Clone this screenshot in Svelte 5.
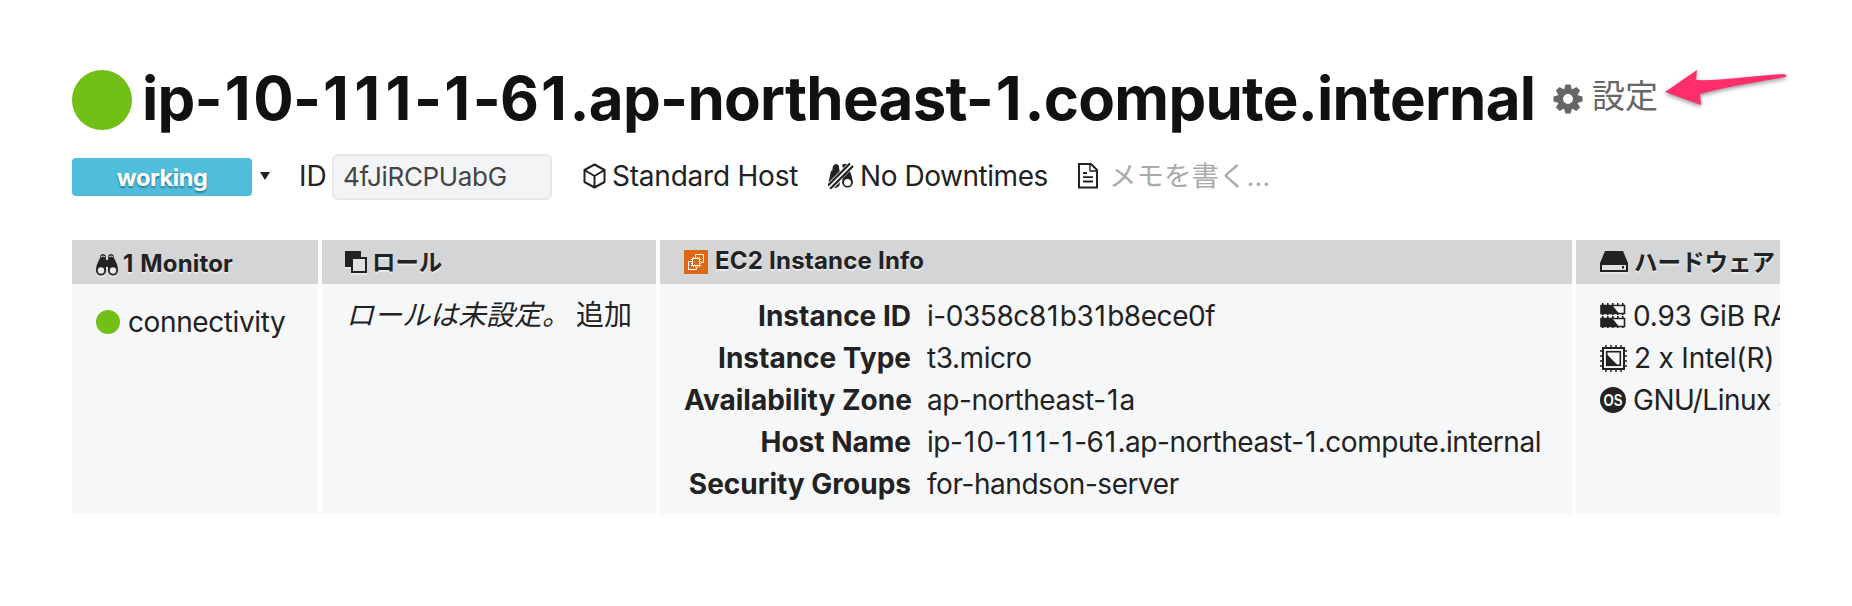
<script>
  const host = 'ip-10-111-1-61.ap-northeast-1.compute.internal';
  const facts = [
    ['Instance ID', 'i-0358c81b31b8ece0f'],
    ['Instance Type', 't3.micro'],
    ['Availability Zone', 'ap-northeast-1a'],
    ['Host Name', host],
    ['Security Groups', 'for-handson-server'],
  ];
  const teeth = [0, 45, 90, 135, 180, 225, 270, 315];
  const pins = [3, 8, 13, 18, 23];
</script>

{#snippet spaced(text)}{#each text.split(/(1)/) as part}{#if part === '1'}<b class="one">1</b>{:else}{part}{/if}{/each}{/snippet}

<main>
  <header class="title">
    <span class="status"></span>
    <h1>{@render spaced(host)}</h1>
    <a class="settings">
      <svg width="30" height="30" viewBox="-15 -15 30 30">
        {#each teeth as a}
          <path d="M-4-9 -2.6-14.5H2.6L4-9Z" transform="rotate({a})" />
        {/each}
        <circle r="7.8" fill="none" stroke="currentColor" stroke-width="5.6" />
      </svg>
      <span>設定</span>
    </a>
    <svg class="arrow" width="132" height="48" viewBox="0 0 132 48">
      <path d="M5 25 37 3 36 13C57 14 91 9 123 7Q127 7 126 10C97 15 66 20 40 27L41 38Z" />
    </svg>
  </header>

  <section class="meta">
    <div class="badge">working</div>
    <svg class="caret" width="10" height="8" viewBox="0 0 10 8"><path d="M0 0H10L5 8Z" /></svg>
    <span class="idlabel">ID</span>
    <div class="idbox"><span>4fJiRCPUabG</span></div>
    <span class="item host">
      <svg width="23" height="26" viewBox="0 0 23 26" fill="none" stroke="currentColor" stroke-width="2" stroke-linejoin="round">
        <path d="M11.5 1.5 21.5 7V19L11.5 24.5 1.5 19V7ZM1.5 7 11.5 13 21.5 7M11.5 13V24" />
      </svg>
      <span>Standard Host</span>
    </span>
    <span class="item down">
      <svg width="26" height="26" viewBox="0 0 26 26">
        <path d="M5 3Q8-1 11 3V6L3 14ZM3 8 11 5 13 14 2 24Q0 20 1 17Z" />
        <path d="M14 2Q18-1 21 3L16 8ZM21 6Q24 12 25 19A5.5 5.5 0 1 1 14 19L15 14Z" />
        <circle cx="19.5" cy="19.5" r="3.5" fill="#fff" />
        <path d="M6 25 12 19Q12 25 6 25Z" />
        <path d="M0 25 24 1" stroke="#fff" stroke-width="7" />
        <path d="M0 22.5 22 .5M2 26 25 3" stroke="currentColor" stroke-width="2.2" />
      </svg>
      <span>No Downtimes</span>
    </span>
    <span class="item memo">
      <svg width="20" height="26" viewBox="0 0 20 26" fill="none" stroke="currentColor" stroke-width="2">
        <path d="M1 1H13L19 7V24.5H1Z" /><path d="M12 1V8H19" stroke-width="1.4" />
        <path d="M5 10H9M5 14.2H15M5 18.5H15" stroke-width="1.8" />
      </svg>
      <span>メモを書く…</span>
    </span>
  </section>

  <section class="panels">
    <article>
      <h2 class="low">
        <svg width="22" height="23" viewBox="0 0 22 23">
          <path d="M4 3Q7-1 10 3V18A5 5 0 1 1 0 17Q0 12 4 5ZM18 3Q15-1 12 3V18A5 5 0 1 0 22 17Q22 12 18 5Z" />
          <path d="M9 7H13V14H9Z" />
          <path d="M4.5 4Q7 2 9.5 4M12.5 4Q15 2 17.5 4" fill="none" stroke="#d4d5d7" />
          <circle cx="5" cy="17.5" r="3.2" fill="#e8e8e9" /><circle cx="17" cy="17.5" r="3.2" fill="#e8e8e9" />
        </svg>
        <span class="monitor">{@render spaced('1 Monitor')}</span>
      </h2>
      <div class="check"><i></i><span>connectivity</span></div>
    </article>

    <article>
      <h2 class="roles">
        <svg width="22" height="22" viewBox="0 0 22 22">
          <path d="M0 0H16V6H6V16H0Z" />
          <path d="M7 7H21V21H7Z" fill="#e2e2e3" stroke="currentColor" stroke-width="2" />
        </svg>
        <span>ロール</span>
      </h2>
      <p class="role"><em>ロールは未設定。</em><span>追加</span></p>
    </article>

    <article>
      <h2 class="ec2">
        <svg width="24" height="24" viewBox="0 0 24 24" fill="none" stroke="#fff">
          <rect width="24" height="24" fill="#dc6814" stroke="none" />
          <path d="M11.5 7V4.5H19.5V12.5H17M7 11.5H4.5V19.5H12.5V17" />
          <rect x="8.5" y="8.5" width="7" height="7" />
          <path d="M9 7.5H16M9 16.8H16M7.5 9V16M16.8 9V16" stroke-dasharray="1 1" stroke-width="1" />
        </svg>
        <span>EC2 Instance Info</span>
      </h2>
      <dl>
        {#each facts as [k, v]}
          <dt>{k}</dt><dd>{@render spaced(v)}</dd>
        {/each}
      </dl>
    </article>

    <article>
      <h2 class="hardware">
        <svg width="28" height="22" viewBox="0 0 28 22">
          <path d="M5 0H23L28 12V21H0V12Z" />
          <path d="M2 14H26V19H2Z" fill="#e2e2e3" /><path d="M22 15H24V17.5H22Z" />
        </svg>
        <span>ハードウェア</span>
      </h2>
      <ul>
        <li>
          <svg width="26" height="26" viewBox="0 0 26 26">
            {#each [0, 13] as y}
              <g transform="translate(0 {y})">
                {#each pins as x}<path d="M{x - 1} 0h1.6v12h-1.6z" />{/each}
                <path d="M1 2.5H24.5V10.5H1Z" fill="#f6f7f9" stroke="currentColor" stroke-width="1.6" />
                <path d="M1 2H12L19 10.5H1Z" />
              </g>
            {/each}
          </svg>
          <span>0.93 GiB RAM</span>
        </li>
        <li>
          <svg width="27" height="27" viewBox="0 0 27 27">
            <path d="M6 0V27M11 0V27M16 0V27M21 0V27M0 6H27M0 11H27M0 16H27M0 21H27" stroke="currentColor" stroke-width="1.5" />
            <rect x="3" y="3" width="21" height="21" fill="#f6f7f9" stroke="currentColor" stroke-width="2" />
            <rect x="6.7" y="6.7" width="13.6" height="13.6" fill="none" stroke="currentColor" stroke-width="1.6" />
            <path d="M6.5 9 18 20.5H6.5Z" />
          </svg>
          <span>2 x Intel(R)</span>
        </li>
        <li class="os">
          <svg width="26" height="26" viewBox="0 0 26 26">
            <circle cx="13" cy="13" r="13" />
            <text x="13" y="19" text-anchor="middle" textLength="19" lengthAdjust="spacingAndGlyphs" fill="#f6f7f9">OS</text>
          </svg>
          <span>GNU/Linux 4</span>
        </li>
      </ul>
    </article>
  </section>
</main>

<style>
  :global(body) { background: #fff; }
  main {
    box-sizing: border-box;
    width: 1852px;
    height: 606px;
    padding: 58px 72px 0;
    overflow: hidden;
    color: #222;
    font: 28px/42px Inter, "Noto Sans CJK JP", sans-serif;
  }
  svg { display: block; flex: none; fill: currentColor; }
  svg[fill="none"] { fill: none; }
  span, h1, dt, dd { white-space: nowrap; }
  h1, h2, p, dl, dd, ul { margin: 0; padding: 0; }
  .one { margin-left: .045em; letter-spacing: .045em; font-weight: inherit; }

  .title { position: relative; display: flex; align-items: center; height: 84px; }
  .status { width: 60px; height: 60px; flex: none; border-radius: 50%; background: #72bf17; }
  h1 { width: 1411px; margin: -4px 0 0 10px; font-size: 60px; line-height: 80px; font-weight: 700; letter-spacing: -.73px; color: #111; }
  .settings { display: flex; align-items: center; gap: 9px; color: #666; font-size: 33px; margin-top: -4px; }
  .settings svg { margin-top: 1px; }
  .settings span { margin-top: -4px; }
  .arrow { position: absolute; left: 1588px; top: 9px; color: #ff2f6e; filter: drop-shadow(0 2px 2px rgba(0, 0, 0, .4)); }

  .meta { display: flex; align-items: center; height: 46px; margin-top: 12px; }
  .badge {
    box-sizing: border-box; width: 180px; height: 38px; flex: none; border-radius: 4px; background: #4fbddb; color: #fff;
    font-size: 23.5px; line-height: 40px; font-weight: 700; letter-spacing: -.4px;
    text-align: center; text-shadow: 0 2px 2px rgba(0, 0, 0, .35);
  }
  .caret { margin: -2px 0 0 8px; }
  .idlabel { width: 33px; margin: -2px 0 0 29px; }
  .idbox {
    box-sizing: border-box; width: 220px; height: 46px; flex: none; padding-left: 9px;
    border: 2px solid #e6e7e9; border-radius: 6px; background: #f3f4f6; color: #444;
    font-size: 26px; line-height: 41px; letter-spacing: -.35px;
  }
  .item { display: flex; align-items: center; margin-top: -2px; }
  .host { width: 216px; margin-left: 31px; gap: 6px; letter-spacing: -.22px; }
  .down { width: 220px; margin-left: 29px; gap: 6px; letter-spacing: -.45px; }
  .memo { margin-left: 30px; gap: 11px; }
  .memo span { color: #aaa; font-size: 27.5px; }

  .panels { display: grid; grid-template-columns: 246px 334px 912px 204px; gap: 4px; width: 1708px; height: 274px; margin-top: 40px; overflow: hidden; }
  article { background: #f6f7f9; overflow: hidden; }
  h2 {
    display: flex; align-items: center; gap: 7px; box-sizing: border-box; height: 44px; padding: 0 0 0 24px;
    background: #d4d5d7; font-size: 24px; line-height: 44px; font-weight: 700; text-shadow: 0 2px 0 rgba(255, 255, 255, .5);
  }
  h2 span { margin-top: 2px; }
  .ec2 span { margin-top: -2px; letter-spacing: .22px; }
  .roles { gap: 5px; font-size: 23.4px; padding-left: 23px; }
  .hardware { gap: 6px; font-size: 23.5px; }
  h2 svg { filter: drop-shadow(0 2px 0 rgba(255, 255, 255, .4)); }
  .ec2 svg { filter: none; }
  .low { gap: 4px; }
  .low svg { margin-top: 4px; }
  .low span { margin-top: 3px; letter-spacing: .15px; }
  .check { display: flex; align-items: center; gap: 8px; padding: 17px 0 0 24px; letter-spacing: -.4px; }
  .check i { width: 24px; height: 24px; border-radius: 50%; background: #72bf17; }
  .role { display: flex; gap: 6px; padding: 10px 0 0 24px; }
  dl { display: grid; grid-template-columns: 227px auto; column-gap: 16px; padding: 11px 0 0 24px; }
  dt { text-align: right; font-weight: 700; }
  dd { letter-spacing: -.44px; }
  ul { list-style: none; padding: 11px 0 0 24px; }
  li { display: flex; align-items: center; gap: 7px; height: 42px; letter-spacing: -.2px; }
  .os { letter-spacing: -.5px; }
  text { font: 700 17px "Liberation Sans", sans-serif; letter-spacing: 0; }
</style>
